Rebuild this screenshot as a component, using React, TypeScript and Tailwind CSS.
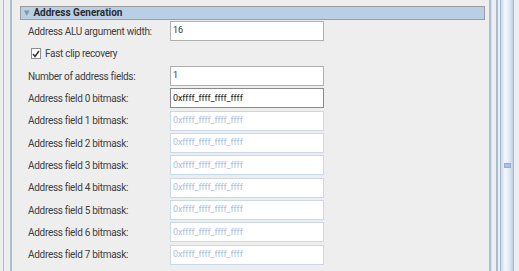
import React from "react";

const FONT = { fontFamily: "Roboto, 'DejaVu Sans', sans-serif" };

function Field({ label, value, disabled, focused }: { label: string; value: string; disabled?: boolean; focused?: boolean }) {
  return (
    <div className="flex items-center h-[20px]">
      <span className="w-[150px] pl-[8px] text-[10px] tracking-[-0.3px] text-[#404040] whitespace-nowrap">{label}</span>
      <div
        className={
          "w-[154px] h-[20px] flex items-center pl-[2px] text-[9px] tracking-[-0.1px] bg-white border " +
          (disabled
            ? "border-[#c9d9ea] text-[#a9c1de]"
            : focused
              ? "border-[#8a8a8a] text-[#222]"
              : "border-[#b0b0b0] text-[#333]")
        }
      >
        {value}
      </div>
    </div>
  );
}

export default function App() {
  const mask = "0xffff_ffff_ffff_ffff";
  return (
    <div className="flex w-[519px] h-[271px] bg-[#eeeeee] overflow-hidden" style={FONT}>
      {/* Left gutter */}
      <div className="w-[3px]" />
      <div className="w-px bg-[#b9b9b9]" />
      <div className="w-[6px]" />
      <div className="w-[2px] bg-[#a9bfdc]" />
      <div className="w-[8px]" />

      {/* Content */}
      <div className="w-[465px] flex flex-col pt-[6px]">
        <div className="h-[14px] flex items-center bg-[#b9cfe6] border border-[#9d9d9d]">
          <span className="ml-[3px] text-[7px] text-[#8595a6] leading-none">▼</span>
          <span className="ml-[4px] text-[10px] font-bold text-[#2b2b2b] leading-none">Address Generation</span>
        </div>

        <div className="mt-[1px]">
          <Field label="Address ALU argument width:" value="16" />
        </div>

        <div className="h-[25px] flex items-center pl-[11px]">
          <div className="w-[10px] h-[11px] border border-[#8f8f8f] bg-white flex items-center justify-center">
            <svg width="8" height="8" viewBox="0 0 8 8">
              <path d="M1 4 L3 6.5 L7 1" fill="none" stroke="#333" strokeWidth="1.5" />
            </svg>
          </div>
          <span className="ml-[4px] text-[10px] tracking-[-0.3px] text-[#404040]">Fast clip recovery</span>
        </div>

        <div className="flex flex-col gap-[2.35px]">
          <Field label="Number of address fields:" value="1" />
          <Field label="Address field 0 bitmask:" value={mask} focused />
          {[1, 2, 3, 4, 5, 6, 7].map((i) => (
            <Field key={i} label={`Address field ${i} bitmask:`} value={mask} disabled />
          ))}
        </div>
      </div>

      {/* Right gutter */}
      <div className="w-[4px]" />
      <div className="w-[2px] bg-[#a9bfdc]" />
      <div className="w-px bg-[#d3e0ef]" />
      <div className="w-[4px]" />
      <div className="w-[2px] bg-[#a6bcd9]" />
      <div className="w-[2px]" />
      <div className="relative w-[14px] border-l border-r border-[#a3b8d2] bg-[linear-gradient(90deg,#c9d8ea,#f5f9fd_35%,#dfe9f5_70%,#bccfe6)]">
        <div className="absolute left-[3px] top-[163px] w-[7px] h-[5px] bg-[#aebfe0] border border-[#98acd0]" />
      </div>
    </div>
  );
}
